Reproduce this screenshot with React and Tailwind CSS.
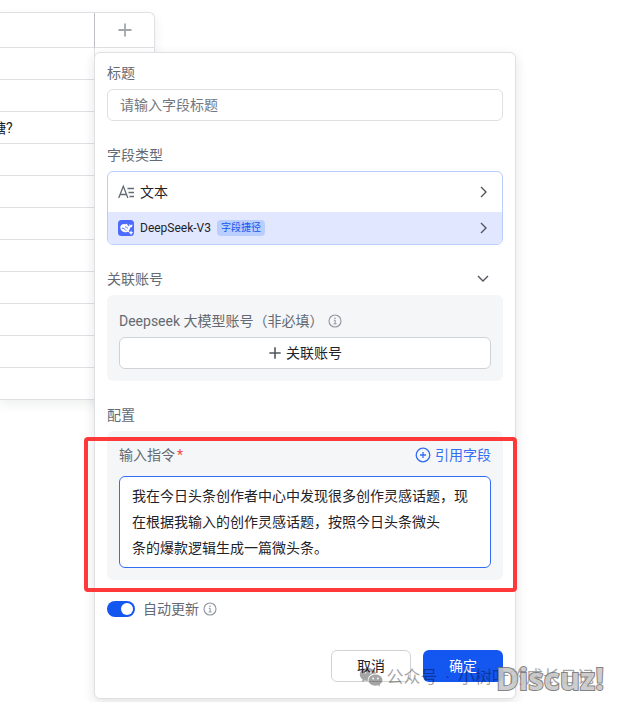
import { useState } from "react";

const rows = ["", "", "糖?", "", "", "", "", "", "", "", ""];

function PlusIcon({ className }) {
  return (
    <svg viewBox="0 0 16 16" className={className} fill="none" stroke="currentColor" aria-hidden="true">
      <path d="M8 1.5v13M1.5 8h13" strokeWidth="1.8" />
    </svg>
  );
}

function Chevron({ className }) {
  return (
    <svg viewBox="0 0 16 16" className={className} fill="none" stroke="currentColor" aria-hidden="true">
      <path d="M5 3l5 5-5 5" strokeWidth="1.4" />
    </svg>
  );
}

function InfoIcon({ className }) {
  return (
    <svg viewBox="0 0 14 14" className={className} fill="none" stroke="currentColor" aria-hidden="true">
      <circle cx="7" cy="7" r="6" strokeWidth="1.1" />
      <path d="M5.8 6.3h1.4v3.4M5.6 9.9h3" strokeWidth="1" />
      <circle cx="7" cy="4.2" r="0.8" fill="currentColor" stroke="none" />
    </svg>
  );
}

function TextTypeIcon() {
  return (
    <svg viewBox="0 0 16 16" className="size-4 text-[#646a73]" fill="none" stroke="currentColor" aria-hidden="true">
      <path d="M.7 14L5.3 2.2 9.9 14M2.3 10.5h6" strokeWidth="1.3" />
      <path d="M9.5 4.5H16M10.5 8.5H16M11.5 12.5H16" strokeWidth="1.4" />
    </svg>
  );
}

function WhaleIcon() {
  return (
    <svg viewBox="0 0 16 16" className="size-4" aria-hidden="true">
      <rect width="16" height="16" rx="3.5" fill="#4d6bfe" />
      <path
        d="M2.3 7.4C2.3 5.3 4 4 6 4c.9 0 1.3.4 1.7.2.5-.2.9-.6 1.3-.4.3.2 0 .9.7 1.4.6.5 1.1.9 1.4 1.4.3-.2.3-.8.1-1.6-.1-.5 0-.9.3-.7.4.3.7.8 1.2.9.5 0 1-.5 1.5-.6.4 0 .3.7.1 1.3-.4 1-1.2 1.5-2.1 1.7-.2 1.6-.9 2.6-1.6 3.3.4.3.9.4.9.7 0 .5-1.2.5-2 .1-.7.4-1.7.6-2.6.5C4.3 12 2.3 10 2.3 7.4z"
        fill="#fff"
      />
      <path d="M4.2 8.2c1.5-.3 2.6 1 3.7 2.2" fill="none" stroke="#4d6bfe" strokeWidth="1" strokeLinecap="round" />
      <path d="M7.5 6.9c.9-.3 1.8.3 1.9 1.3" fill="none" stroke="#4d6bfe" strokeWidth=".9" strokeLinecap="round" />
      <path d="M13 10.3l.7 1.8 1.8.7-1.8.7-.7 1.8-.7-1.8-1.8-.7 1.8-.7z" fill="#fff" />
    </svg>
  );
}

function WechatIcon() {
  return (
    <svg viewBox="0 0 24 20" className="h-5 w-6" aria-hidden="true">
      <path
        d="M9 1C4.3 1 .8 3.9.8 7.5c0 2 1.1 3.8 2.9 5L3 15l2.8-1.4c1 .3 2 .4 3.1.4-.7-4.2 2.9-7.6 8.1-7.5C16.3 3.3 13 1 9 1z"
        fill="currentColor"
      />
      <path
        d="M16.5 7.5c-4 0-7 2.5-7 5.6s3 5.6 7 5.6c.8 0 1.7-.1 2.4-.4l2.3 1.2-.6-2c1.8-1 2.9-2.6 2.9-4.4 0-3.1-3.1-5.600-7-5.600z"
        fill="currentColor"
      />
      <g fill="#fff">
        <circle cx="6.3" cy="5.5" r="1" />
        <circle cx="11.5" cy="5.5" r="1" />
        <circle cx="14.2" cy="11.5" r=".9" />
        <circle cx="18.8" cy="11.5" r=".9" />
      </g>
    </svg>
  );
}

function Sheet() {
  return (
    <div className="mr-[465px] rounded-tr-md border-t border-r border-[#dee0e3] shadow-[0_4px_12px_rgba(31,35,41,0.08)]">
      <table className="w-full table-fixed border-separate border-spacing-0">
        <thead>
          <tr>
            <th className="h-[35px] border-r border-b border-r-[#bbbfc4] border-b-[#dee0e3]" />
            <th className="w-[59px] border-b border-[#dee0e3]">
              <button aria-label="添加字段" className="flex h-[34px] w-full items-center justify-center text-[#a1a6ab]">
                <PlusIcon className="size-4" />
              </button>
            </th>
          </tr>
        </thead>
        <tbody>
          {rows.map((text, index) => (
            <tr key={index}>
              <td className="h-8 border-r border-b border-[#dee0e3] text-sm text-[#1f2329]">
                {text && <span className="-ml-2 block leading-5">{text}</span>}
              </td>
              <td className="border-b border-[#dee0e3]" />
            </tr>
          ))}
        </tbody>
      </table>
    </div>
  );
}

function FieldPanel() {
  const [title, setTitle] = useState("");
  const [autoUpdate, setAutoUpdate] = useState(true);
  const [prompt, setPrompt] = useState(
    "我在今日头条创作者中心中发现很多创作灵感话题，现在根据我输入的创作灵感话题，按照今日头条微头\n条的爆款逻辑生成一篇微头条。"
  );

  return (
    <form
      onSubmit={(e) => e.preventDefault()}
      className="absolute top-[52px] right-[104px] left-[94px] flex flex-col gap-[22px] rounded-md border border-[#dee0e3] bg-white px-3 pt-2 pb-4 text-[#646a73] shadow-[0_4px_12px_rgba(31,35,41,0.12)]"
    >
      <div>
        <label htmlFor="title" className="mb-1 block leading-6">
          标题
        </label>
        <input
          id="title"
          value={title}
          onChange={(e) => setTitle(e.target.value)}
          placeholder="请输入字段标题"
          className="block h-8 w-full rounded-md border border-[#dee0e3] px-3 placeholder:text-[#73777e]"
        />
      </div>

      <div>
        <p className="mb-1 leading-6">字段类型</p>
        <div className="overflow-hidden rounded-md border border-[#bacefd] text-[#1f2329]">
          <button type="button" className="flex h-10 w-full items-center gap-1.5 px-2.5">
            <TextTypeIcon />
            文本
            <Chevron className="ml-auto size-4 text-[#51565d]" />
          </button>
          <button type="button" className="flex h-8 w-full items-center gap-1.5 bg-[#e0e7ff] px-2.5 text-xs">
            <WhaleIcon />
            DeepSeek-V3
            <span className="h-4 rounded-sm bg-[#bacefd] px-1 text-[10px] leading-4 text-[#1456f0]">字段捷径</span>
            <Chevron className="ml-auto size-4 text-[#51565d]" />
          </button>
        </div>
      </div>

      <div>
        <button type="button" className="mb-1 flex w-full items-center justify-between pr-3 leading-6">
          关联账号
          <Chevron className="size-4 rotate-90 text-[#51565d]" />
        </button>
        <div className="rounded-md bg-[#f5f6f7] px-3 pt-3.5 pb-3">
          <p className="mb-1 flex items-center gap-1 leading-6">
            Deepseek 大模型账号（非必填）
            <InfoIcon className="size-3.5 text-[#8f959e]" />
          </p>
          <button
            type="button"
            className="flex h-8 w-full items-center justify-center gap-1 rounded-md border border-[#d0d3d6] bg-white text-[#1f2329]"
          >
            <PlusIcon className="size-3.5 text-[#51565d]" />
            关联账号
          </button>
        </div>
      </div>

      <div>
        <p className="mb-1 leading-6">配置</p>
        <div className="rounded-md bg-[#f5f6f7] p-3">
          <div className="mb-[9px] flex items-center justify-between leading-6">
            <label htmlFor="prompt">
              输入指令<span className="ml-0.5 text-[#f54a45]">*</span>
            </label>
            <button type="button" className="flex items-center gap-1 text-[#336df4]">
              <svg viewBox="0 0 16 16" className="size-4" fill="none" stroke="currentColor" aria-hidden="true">
                <circle cx="8" cy="8" r="6.8" strokeWidth="1.3" />
                <path d="M8 5v6M5 8h6" strokeWidth="1.3" />
              </svg>
              引用字段
            </button>
          </div>
          <textarea
            id="prompt"
            rows={3}
            value={prompt}
            onChange={(e) => setPrompt(e.target.value)}
            className="block w-full resize-none overflow-hidden rounded-md border border-[#336df4] bg-white px-3 py-1.5 leading-[26px] text-[#1f2329] outline-none"
          />
        </div>
      </div>

      <div className="-mt-1 flex items-center">
        <label className="flex cursor-pointer items-center gap-2 leading-[22px]">
          <input
            type="checkbox"
            role="switch"
            checked={autoUpdate}
            onChange={(e) => setAutoUpdate(e.target.checked)}
            className="h-4 w-7 appearance-none rounded-full bg-[#bbbfc4] p-0.5 before:block before:size-3 before:rounded-full before:bg-white checked:bg-[#1456f0] checked:before:translate-x-3"
          />
          自动更新
        </label>
        <InfoIcon className="ml-1 size-3.5 text-[#8f959e]" />
      </div>

      <div className="mt-2 flex justify-end gap-3">
        <button type="button" className="h-8 w-20 rounded-md border border-[#d0d3d6] bg-white text-[#1f2329]">
          取消
        </button>
        <button type="submit" className="h-8 w-20 rounded-md bg-[#1456f0] text-white">
          确定
        </button>
      </div>
    </form>
  );
}

function App() {
  return (
    <main className="relative overflow-hidden bg-white pt-3 pb-[302px] font-['Roboto','Noto_Sans_CJK_SC',sans-serif] text-sm">
      <Sheet />
      <FieldPanel />
      {/* Highlight around the prompt */}
      <div className="pointer-events-none absolute top-[437px] right-[103px] left-[84px] h-[155px] rounded-sm border-4 border-[#ff3939]" />
      {/* Watermarks */}
      <div className="pointer-events-none absolute top-[665px] right-[26px] flex items-center gap-1 text-[17px] leading-6 whitespace-nowrap text-black opacity-35">
        <WechatIcon />
        <p className="flex gap-2">
          <span>公众号</span>
          <span>·</span>
          <span>小树叶的成长日记</span>
        </p>
      </div>
      <div className="pointer-events-none absolute top-[662px] right-4 font-['Open_Sans',sans-serif] text-[31px] leading-8 font-bold text-[#c8c8c8] opacity-90 [-webkit-text-stroke:2px_#777] [paint-order:stroke]">
        Discuz!
      </div>
    </main>
  );
}

export default App;
